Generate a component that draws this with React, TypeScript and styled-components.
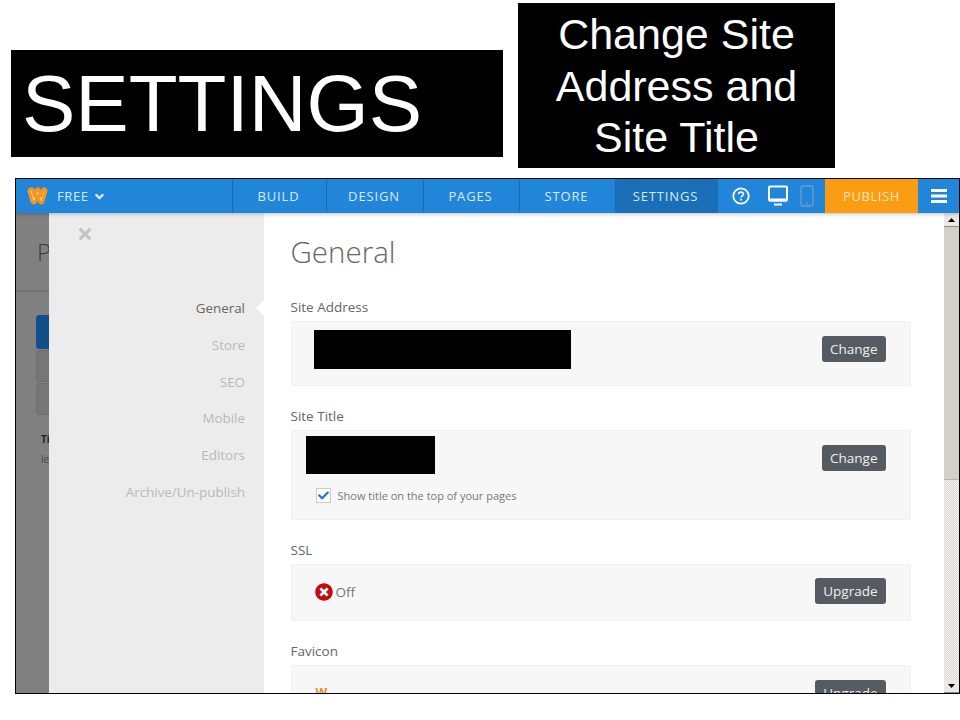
import styled, { createGlobalStyle } from 'styled-components';
import { FaCheck, FaTimes, FaTimesCircle } from 'react-icons/fa';
import { FiChevronDown } from 'react-icons/fi';

const GlobalStyle = createGlobalStyle`
  html, body {
    margin: 0;
    padding: 0;
    background: #fff;
  }
  body {
    font-family: 'Open Sans', 'Liberation Sans', sans-serif;
  }
`;

const Page = styled.div`
  width: 960px;
  height: 720px;
  overflow: hidden;
  background: #fff;
`;

const TitleRow = styled.div`
  display: flex;
  align-items: flex-start;
  gap: 15px;
  padding: 3px 0 0 11px;
  height: 178px;
  box-sizing: border-box;
`;

const MainTitle = styled.div`
  width: 492px;
  height: 107px;
  margin-top: 47px;
  padding-left: 11px;
  box-sizing: border-box;
  background: #000;
  color: #fff;
  font-family: 'Liberation Sans', Arial, sans-serif;
  font-size: 80px;
  line-height: 107px;
`;

const SubTitle = styled.div`
  width: 317px;
  height: 165px;
  background: #000;
  color: #fff;
  font-family: 'Liberation Sans', Arial, sans-serif;
  font-size: 43px;
  line-height: 51.5px;
  text-align: center;
  padding-top: 6px;
  box-sizing: border-box;
`;

const Window = styled.div`
  width: 945px;
  height: 516px;
  margin-left: 15px;
  border: 1px solid #000;
  box-sizing: border-box;
  display: flex;
  flex-direction: column;
  overflow: hidden;
`;

const NavBar = styled.div`
  height: 34px;
  flex: none;
  display: flex;
  align-items: stretch;
  background: #2185d9;
  color: #fff;
  position: relative;
  z-index: 2;
  box-shadow: 0 1px 4px rgba(0, 0, 0, 0.25);
`;

const Brand = styled.div`
  width: 216px;
  display: flex;
  align-items: center;
  padding-left: 10px;
  gap: 9px;
  box-sizing: border-box;
  font-size: 13px;
  letter-spacing: 0.6px;
  color: #d8ebfa;
`;

const PlanLabel = styled.span`
  display: flex;
  align-items: center;
  gap: 4px;
`;

const NavItem = styled.div<{ $width: number; $active?: boolean }>`
  width: ${(p) => p.$width}px;
  box-sizing: border-box;
  display: flex;
  align-items: center;
  justify-content: center;
  border-left: 1px solid #1a6db5;
  background: ${(p) => (p.$active ? '#1a6fb8' : 'transparent')};
  font-size: 13px;
  letter-spacing: 0.85px;
  color: #d8ebfa;
  padding-right: 2px;
`;

const DeviceGroup = styled.div`
  width: 108px;
  box-sizing: border-box;
  border-left: 1px solid #1a6db5;
  display: flex;
  align-items: center;
  padding-left: 14px;
  gap: 18px;
`;

const PhoneSlot = styled.span`
  display: flex;
  margin-left: -6px;
`;

const PublishButton = styled.div`
  width: 93px;
  display: flex;
  align-items: center;
  justify-content: center;
  background: #fb9d13;
  font-size: 13px;
  letter-spacing: 0.6px;
  color: #fde3b8;
`;

const MenuButton = styled.div`
  flex: 1;
  display: flex;
  align-items: center;
  justify-content: center;
`;

const Body = styled.div`
  flex: 1;
  min-height: 0;
  display: flex;
`;

const Backdrop = styled.div`
  width: 33px;
  flex: none;
  background: #808080;
  overflow: hidden;
  color: #3a3a3a;
`;

const BackdropHead = styled.div`
  height: 79px;
  box-sizing: border-box;
  border-bottom: 2px solid #737373;
  padding: 21px 0 0 21px;
  font-size: 24px;
  font-weight: 300;
  line-height: 36px;
`;

const BackdropList = styled.div`
  display: flex;
  flex-direction: column;
  gap: 1px;
  padding: 23px 0 0 20px;
`;

const BackdropTab = styled.div<{ $active?: boolean }>`
  width: 40px;
  height: ${(p) => (p.$active ? 34 : 32)}px;
  border-radius: 3px;
  background: ${(p) => (p.$active ? '#124f8a' : '#767676')};
  border: 1px solid ${(p) => (p.$active ? '#124f8a' : '#6e6e6e')};
  box-sizing: border-box;
`;

const BackdropName = styled.div`
  margin: 17px 0 0 25px;
  font-size: 10px;
  font-weight: 700;
  white-space: nowrap;
  color: #222;
`;

const BackdropMeta = styled.div`
  margin: 6px 0 0 25px;
  font-size: 10px;
  white-space: nowrap;
  color: #444;
`;

const Sidebar = styled.div`
  width: 215px;
  flex: none;
  position: relative;
  background: #ececec;
  box-sizing: border-box;
  padding: 77px 19px 0 0;
  display: flex;
  flex-direction: column;
  align-items: flex-end;
`;

const CloseIcon = styled.div`
  position: absolute;
  left: 27px;
  top: 12px;
  color: #c4c4c4;
  font-size: 18px;
  line-height: 18px;
`;

const SideLink = styled.div<{ $active?: boolean }>`
  position: relative;
  height: 36.8px;
  line-height: 36px;
  font-size: 13.4px;
  color: ${(p) => (p.$active ? '#666' : '#b9b9b9')};

  ${(p) =>
    p.$active &&
    `&::after {
      content: '';
      position: absolute;
      right: -19px;
      top: 10px;
      border: 8px solid transparent;
      border-right-color: #fff;
      border-left-width: 0;
    }`}
`;

const Content = styled.div`
  flex: 1;
  min-width: 0;
  overflow: hidden;
  background: #fff;
  padding: 18px 33px 0 26.500px;
  color: #666;
`;

const Heading = styled.h1`
  margin: 0 0 24px;
  font-size: 29.500px;
  line-height: 42px;
  font-weight: 300;
  color: #666;
`;

const Label = styled.div`
  font-size: 13.500px;
  line-height: 20px;
  color: #666;
  margin-bottom: 4px;
`;

const Card = styled.div<{ $height: number }>`
  height: ${(p) => p.$height}px;
  box-sizing: border-box;
  background: #f7f7f7;
  border: 1px solid #f0f0f0;
  border-radius: 2px;
  margin-bottom: 20px;
  display: flex;
  justify-content: space-between;
  align-items: flex-start;
`;

const Redacted = styled.div<{ $width: number; $height: number; $left: number; $top: number }>`
  width: ${(p) => p.$width}px;
  height: ${(p) => p.$height}px;
  margin: ${(p) => p.$top}px 0 0 ${(p) => p.$left}px;
  background: #000;
`;

const ActionButton = styled.div<{ $top: number }>`
  height: 26px;
  margin: ${(p) => p.$top}px 24px 0 0;
  padding: 0 8.500px;
  box-sizing: border-box;
  background: #565b62;
  border-radius: 3px;
  color: #f0f0f0;
  font-size: 13.500px;
  line-height: 26px;
`;

const CheckRow = styled.div`
  display: flex;
  align-items: center;
  gap: 7px;
  margin: 14px 0 0 24px;
  font-size: 11px;
  color: #777;
`;

const CheckBox = styled.div`
  width: 15px;
  height: 15px;
  box-sizing: border-box;
  background: #fff;
  border: 1px solid #c6ccd2;
  display: flex;
  align-items: center;
  justify-content: center;
  color: #1a78d2;
  font-size: 11px;
`;

const StatusRow = styled.div`
  display: flex;
  align-items: center;
  gap: 3px;
  margin: 17px 0 0 23px;
  font-size: 13.500px;
  line-height: 20px;
  color: #777;
`;

const StatusIcon = styled.span`
  display: flex;
  color: #c50b0b;
  font-size: 18px;
`;

const FaviconMark = styled.div`
  margin: 21px 0 0 24px;
  color: #e8892b;
  font-size: 12px;
  line-height: 12px;
  font-weight: 700;
`;

const Scrollbar = styled.div`
  width: 15px;
  flex: none;
  display: flex;
  flex-direction: column;
  background: repeating-conic-gradient(#f3f1ee 0 25%, #dcd9d4 0 50%) 0 0 / 2px 2px;
`;

const ScrollButton = styled.div`
  height: 14px;
  flex: none;
  background: #ece9e4;
  border-bottom: 1px solid #8c8a86;
  box-sizing: border-box;
  display: flex;
  align-items: center;
  justify-content: center;
`;

const ScrollThumb = styled.div`
  height: 253px;
  flex: none;
  background: #d4d0c8;
  border-bottom: 1px solid #b5b2ab;
  box-sizing: border-box;
`;

const ScrollGap = styled.div`
  flex: 1;
`;

const WeeblyLogo = () => (
  <svg width="22" height="18" viewBox="0 0 22 18">
    <path
      d="M3 4c0-2 3-3 4-1l1.500 6 2-6c.5-1.500 2-1.500 2.500 0l1.800 6 1.700-6c.6-2 3.800-1 3.300 1.200L17 14c-.7 2.400-3 2.400-3.700.3L11.500 9l-1.800 5.300c-.7 2.100-3 2.100-3.700-.3z"
      fill="#ffe9b8"
      stroke="#f7941d"
      strokeWidth="3.200"
      strokeLinejoin="round"
    />
  </svg>
);

const HelpIcon = () => (
  <svg width="18" height="18" viewBox="0 0 18 18" fill="none">
    <circle cx="9" cy="9" r="7.700" stroke="#fff" strokeWidth="1.800" />
    <path d="M6.600 7.300c0-3 4.900-3 4.900-.2 0 1.700-2.400 1.700-2.400 3.400" stroke="#fff" strokeWidth="1.600" />
    <rect x="8.200" y="11.700" width="1.800" height="1.800" fill="#fff" />
  </svg>
);

const DesktopIcon = () => (
  <svg width="20" height="22" viewBox="0 0 20 22" fill="none">
    <rect x="1" y="1.500" width="18" height="14" rx="1" stroke="#fff" strokeWidth="2" />
    <rect x="6" y="18.500" width="8" height="2" fill="#fff" />
    <rect x="1" y="13.500" width="18" height="3" fill="#fff" />
  </svg>
);

const PhoneIcon = () => (
  <svg width="14" height="22" viewBox="0 0 14 22" fill="none">
    <rect x="1" y="1" width="12" height="20" rx="1.500" stroke="#6f9ccb" strokeWidth="1.300" />
    <circle cx="7" cy="18.500" r="0.900" fill="#6f9ccb" />
  </svg>
);

const HamburgerIcon = () => (
  <svg width="16" height="14" viewBox="0 0 16 14">
    <rect y="0" width="16" height="3" fill="#fff" />
    <rect y="5.500" width="16" height="3" fill="#fff" />
    <rect y="11" width="16" height="3" fill="#fff" />
  </svg>
);

const navItems = [
  { label: 'BUILD', width: 94 },
  { label: 'DESIGN', width: 97 },
  { label: 'PAGES', width: 96 },
  { label: 'STORE', width: 96 },
  { label: 'SETTINGS', width: 102, active: true },
];

const sideLinks = ['General', 'Store', 'SEO', 'Mobile', 'Editors', 'Archive/Un-publish'];

export default function App() {
  return (
    <Page>
      <GlobalStyle />
      <TitleRow>
        <MainTitle>SETTINGS</MainTitle>
        <SubTitle>
          Change Site
          <br />
          Address and
          <br />
          Site Title
        </SubTitle>
      </TitleRow>
      <Window>
        <NavBar>
          <Brand>
            <WeeblyLogo />
            <PlanLabel>
              FREE <FiChevronDown size={13} strokeWidth={4} />
            </PlanLabel>
          </Brand>
          {navItems.map((item) => (
            <NavItem key={item.label} $width={item.width} $active={item.active}>
              {item.label}
            </NavItem>
          ))}
          <DeviceGroup>
            <HelpIcon />
            <DesktopIcon />
            <PhoneSlot>
              <PhoneIcon />
            </PhoneSlot>
          </DeviceGroup>
          <PublishButton>PUBLISH</PublishButton>
          <MenuButton>
            <HamburgerIcon />
          </MenuButton>
        </NavBar>
        <Body>
          <Backdrop>
            <BackdropHead>P</BackdropHead>
            <BackdropList>
              <BackdropTab $active />
              <BackdropTab />
              <BackdropTab />
            </BackdropList>
            <BackdropName>Ti</BackdropName>
            <BackdropMeta>le</BackdropMeta>
          </Backdrop>
          <Sidebar>
            <CloseIcon>
              <FaTimes />
            </CloseIcon>
            {sideLinks.map((link) => (
              <SideLink key={link} $active={link === 'General'}>
                {link}
              </SideLink>
            ))}
          </Sidebar>
          <Content>
            <Heading>General</Heading>
            <Label>Site Address</Label>
            <Card $height={65}>
              <Redacted $width={257} $height={39} $left={22.500} $top={8} />
              <ActionButton $top={14}>Change</ActionButton>
            </Card>
            <Label>Site Title</Label>
            <Card $height={90}>
              <div>
                <Redacted $width={129} $height={38} $left={14.500} $top={5} />
                <CheckRow>
                  <CheckBox>
                    <FaCheck />
                  </CheckBox>
                  Show title on the top of your pages
                </CheckRow>
              </div>
              <ActionButton $top={14}>Change</ActionButton>
            </Card>
            <Label>SSL</Label>
            <Card $height={57}>
              <StatusRow>
                <StatusIcon>
                  <FaTimesCircle />
                </StatusIcon>
                Off
              </StatusRow>
              <ActionButton $top={13}>Upgrade</ActionButton>
            </Card>
            <Label>Favicon</Label>
            <Card $height={60}>
              <FaviconMark>W</FaviconMark>
              <ActionButton $top={14}>Upgrade</ActionButton>
            </Card>
          </Content>
          <Scrollbar>
            <ScrollButton>
              <svg width="7" height="4" viewBox="0 0 7 4">
                <path d="M0 4 3.500 0 7 4z" fill="#000" />
              </svg>
            </ScrollButton>
            <ScrollThumb />
            <ScrollGap />
            <ScrollButton>
              <svg width="7" height="4" viewBox="0 0 7 4">
                <path d="M0 0 3.500 4 7 0z" fill="#000" />
              </svg>
            </ScrollButton>
          </Scrollbar>
        </Body>
      </Window>
    </Page>
  );
}
